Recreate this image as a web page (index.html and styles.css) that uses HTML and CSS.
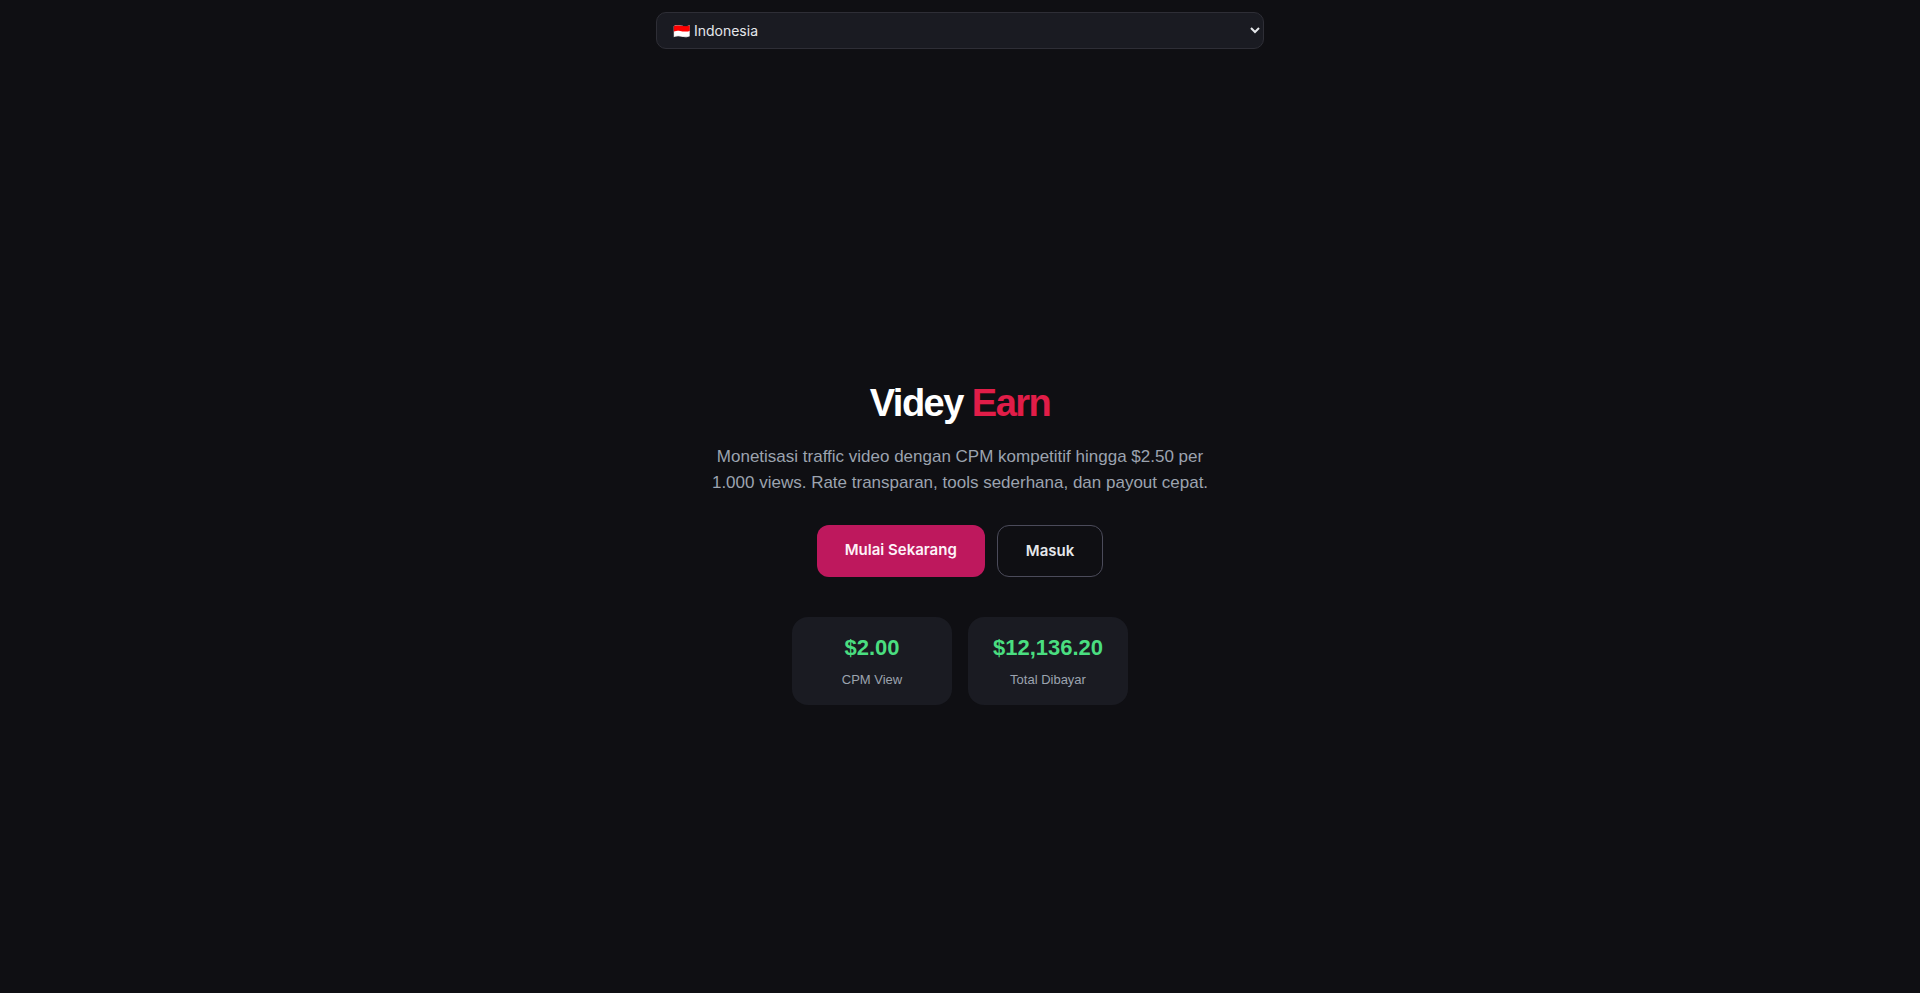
FILE: index.html
```html
<!DOCTYPE html>
<html lang="id">
<head>
    <meta charset="UTF-8">
    <meta name="viewport" content="width=device-width, initial-scale=1.0">
    <title>Videy Earn</title>
    <link rel="stylesheet" href="styles.css">
</head>
<body>
    <header class="lang-bar">
        <select class="lang-select" aria-label="Bahasa">
            <option value="id" selected>🇮🇩 Indonesia</option>
            <option value="en">🇺🇸 English</option>
        </select>
    </header>

    <main class="hero">
        <h1 class="hero-title">Videy <span class="accent">Earn</span></h1>
        <p class="hero-text">Monetisasi traffic video dengan CPM kompetitif hingga $2.50 per 1.000 views. Rate transparan, tools sederhana, dan payout cepat.</p>

        <div class="actions">
            <a href="#register" class="btn btn-primary">Mulai Sekarang</a>
            <a href="#login" class="btn btn-outline">Masuk</a>
        </div>

        <div class="stats">
            <div class="stat">
                <div class="stat-value">$2.00</div>
                <div class="stat-label">CPM View</div>
            </div>
            <div class="stat">
                <div class="stat-value">$12,136.20</div>
                <div class="stat-label">Total Dibayar</div>
            </div>
        </div>
    </main>
</body>
</html>
```

FILE: styles.css
```css
* {
    box-sizing: border-box;
}
body {
    margin: 0;
    min-height: 100vh;
    display: flex;
    flex-direction: column;
    background: #0f0f13;
    color: #e5e7eb;
    font-family: "Liberation Sans", Arial, sans-serif;
}
.lang-bar {
    width: 100%;
    max-width: 640px;
    margin: 0 auto;
    padding: 12px 16px;
}
.lang-select {
    display: block;
    width: 100%;
    padding: 8px 12px;
    border: 1px solid #2e2e36;
    border-radius: 10px;
    background: #1a1b22;
    color: #e5e7eb;
    font-family: Inter, sans-serif;
    font-size: 14px;
}
.hero {
    flex: 1;
    display: flex;
    flex-direction: column;
    align-items: center;
    justify-content: center;
    padding: 30px 16px 0;
    text-align: center;
}
.hero-title {
    margin: 0 0 18px;
    font-size: 38px;
    line-height: 46px;
    letter-spacing: -0.04em;
    color: #fff;
}
.accent {
    color: #e11d48;
}
.hero-text {
    max-width: 520px;
    margin: 0 0 29px;
    font-size: 17px;
    line-height: 26px;
    color: #9ca3af;
}
.actions {
    display: flex;
    gap: 12px;
    margin-bottom: 40px;
}
.btn {
    padding: 16px 28px;
    border-radius: 12px;
    font-family: Inter, sans-serif;
    font-size: 15px;
    font-weight: 600;
    line-height: 18px;
    text-decoration: none;
}
.btn-primary {
    background: #be185d;
    color: #fdf2f8;
}
.btn-outline {
    border: 1px solid #4b4b5a;
    color: #e5e7eb;
}
.stats {
    display: flex;
    gap: 16px;
}
.stat {
    min-width: 160px;
    padding: 18px 24px 16px;
    border-radius: 16px;
    background: #1a1b22;
}
.stat-value {
    margin-bottom: 10px;
    font-size: 22px;
    font-weight: bold;
    line-height: 26px;
    color: #4ade80;
}
.stat-label {
    font-size: 13px;
    line-height: 18px;
    color: #9ca3af;
}
```
